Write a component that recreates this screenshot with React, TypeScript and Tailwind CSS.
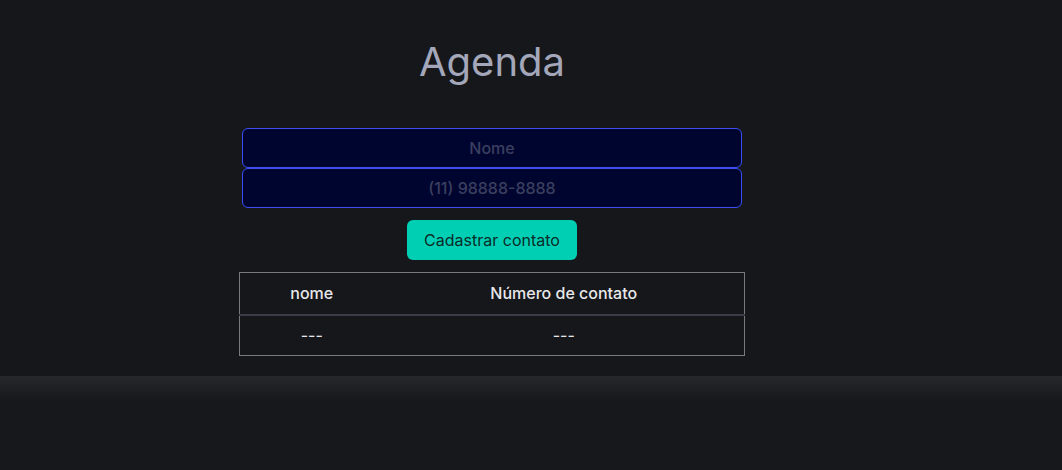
export default function App() {
  return (
    <div className="min-h-[470px] bg-[#16171b] flex flex-col" style={{ fontFamily: "Inter, 'Noto Sans', sans-serif" }}>
      <main className="w-[984px] h-[376px] flex flex-col items-center">
        <h1 className="mt-[38px] text-[40px] leading-[48px] text-[#a3a7b9]">Agenda</h1>

        <form className="mt-[42px] flex flex-col items-center" onSubmit={(e) => e.preventDefault()}>
          <input
            placeholder="Nome"
            className="w-[500px] h-[40px] rounded-[6px] border border-[#3b4ff0] bg-[#000530] text-center text-[16px] font-medium text-white placeholder:text-[#3b3f5f] outline-none"
          />
          <input
            placeholder="(11) 98888-8888"
            className="w-[500px] h-[40px] rounded-[6px] border border-[#3b4ff0] bg-[#000530] text-center text-[16px] font-medium text-white placeholder:text-[#3b3f5f] outline-none"
          />
          <button className="mt-[12px] w-[170px] h-[40px] rounded-[6px] bg-[#00cfb4] text-[16px] text-[#0b2b28]">
            Cadastrar contato
          </button>
        </form>

        <table className="mt-[12px] w-[506px] border border-[#7a7a7a] border-collapse text-[16px] text-[#e8e8ea]">
          <thead>
            <tr className="h-[42px] border-b-2 border-[#3b3e48]">
              <th className="w-[144px] font-medium">nome</th>
              <th className="font-medium">Número de contato</th>
            </tr>
          </thead>
          <tbody>
            <tr className="h-[41px]">
              <td className="text-center">---</td>
              <td className="text-center">---</td>
            </tr>
          </tbody>
        </table>
      </main>
      <footer className="flex-1 h-[94px] bg-gradient-to-b from-[#27282c] to-[#17181b] to-[25px]" />
    </div>
  );
}
